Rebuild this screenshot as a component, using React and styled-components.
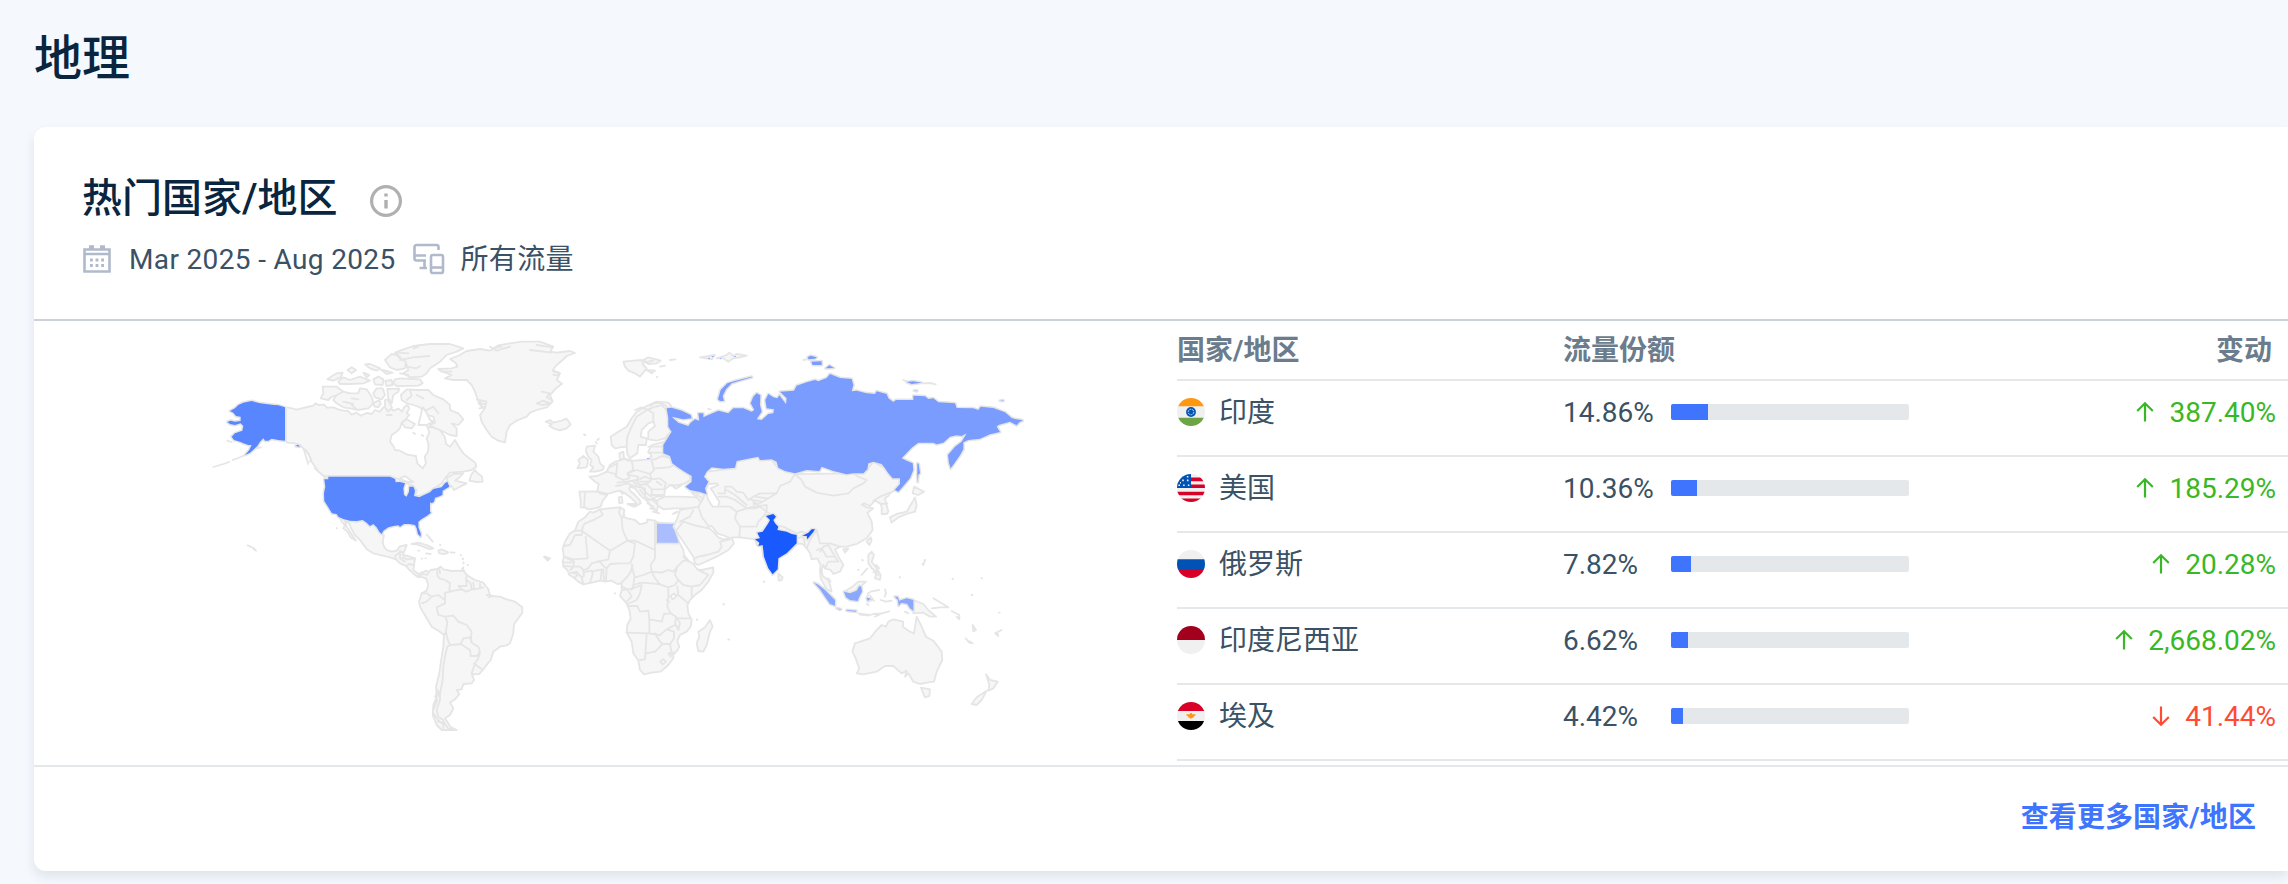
import React from "react";
import styled, { createGlobalStyle } from "styled-components";

const GlobalStyle = createGlobalStyle`
  body {
    margin: 0;
    background: #f5f8fd;
    overflow: hidden;
    font-family: Roboto, "Noto Sans CJK SC", sans-serif;
    color: #3a5166;
  }
`;

const Page = styled.main`
  box-sizing: border-box;
  height: 884px;
  padding: 27px 0 13px 34px;
  display: flex;
  flex-direction: column;
  overflow: hidden;
`;

const PageTitle = styled.h1`
  margin: 0 0 36px;
  height: 64px;
  font-size: 48px;
  line-height: 64px;
  font-weight: 500;
  color: #092540;
`;

const Card = styled.section`
  height: 744px;
  display: flex;
  flex-direction: column;
  background: #fff;
  border-radius: 12px 0 0 12px;
  box-shadow: 0 6px 12px rgba(14, 30, 62, 0.09);
`;

const CardHeader = styled.header`
  box-sizing: border-box;
  height: 194px;
  padding: 44px 48px 0;
  border-bottom: 2px solid #cbd1d7;
`;

const TitleRow = styled.div`
  display: flex;
  align-items: center;
  gap: 32px;
  height: 56px;
`;

const CardTitle = styled.h2`
  margin: 0;
  font-size: 40px;
  line-height: 56px;
  font-weight: 500;
  color: #092540;
`;

const MetaRow = styled.div`
  display: flex;
  align-items: center;
  height: 40px;
  margin-top: 12px;
  padding-left: 1px;
  font-size: 28px;
  line-height: 40px;
`;

const MetaText = styled.span`
  margin: 0 ${(p) => p.$after || 0}px 0 ${(p) => p.$before}px;
  padding-top: 2px;
  letter-spacing: 0.35px;
  white-space: nowrap;
`;

const Icon = styled.svg`
  display: block;
  flex: none;
  width: ${(p) => p.$w}px;
  height: ${(p) => p.$h || p.$w}px;
  margin-top: ${(p) => p.$drop || 0}px;
`;

const CardBody = styled.div`
  height: 444px;
  display: flex;
`;

const MapPane = styled.div`
  box-sizing: border-box;
  flex: none;
  width: 1143px;
  padding: 9px 0 0 166px;
`;

const Table = styled.div`
  flex: 1;
`;

const Row = styled.div`
  box-sizing: border-box;
  display: grid;
  grid-template-columns: 386px 108px 238px 1fr;
  align-items: center;
  height: ${(p) => (p.$head ? 60 : 76)}px;
  padding-bottom: ${(p) => (p.$head ? 0 : 12)}px;
  border-bottom: 2px solid #e4e8eb;
  font-size: 28px;
  line-height: 40px;
`;

const HeadCell = styled.div`
  grid-column: ${(p) => p.$col};
  text-align: ${(p) => p.$align || "left"};
  padding-top: 2px;
  padding-right: ${(p) => (p.$align ? 16 : 0)}px;
  font-weight: 700;
  color: #6b7c8c;
`;

const CellText = styled.span`
  display: block;
  padding-top: 2px;
  white-space: nowrap;
`;

const Country = styled.div`
  display: flex;
  align-items: center;
  gap: 14px;
`;

const Track = styled.div`
  height: 16px;
  border-radius: 2px;
  background: #e4e8eb;
  overflow: hidden;
`;

const Fill = styled.div`
  height: 100%;
  background: #3e74fe;
`;

const Change = styled.div`
  display: flex;
  align-items: center;
  justify-content: flex-end;
  gap: 12px;
  padding-right: 12px;
  color: ${(p) => (p.$down ? "#ff4b33" : "#39b827")};
`;

const CardFooter = styled.footer`
  box-sizing: border-box;
  height: 106px;
  display: flex;
  align-items: center;
  justify-content: flex-end;
  padding: 0 32px 2px 0;
  border-top: 2px solid #e4e8eb;
`;

const MoreLink = styled.a`
  font-size: 28px;
  line-height: 40px;
  font-weight: 700;
  letter-spacing: 0.1px;
  color: #3e74fe;
`;

const MapSvg = styled.svg`
  display: block;
`;

const Land = styled.path`
  fill: ${(p) => p.$fill || "#f6f6f6"};
  stroke: #e5e5e5;
  stroke-width: 5.4;
  stroke-linejoin: round;
  stroke-linecap: round;
`;

const TintedLand = styled(Land)`
  stroke-width: 9;
  paint-order: stroke;
`;

// Each sheet holds outlines in thirds of a pixel, measured from its own origin.
const SHEETS = [
  {
    at: [200, 320],
    land: [
      "M257,262 272,264 290,269 305,265 322,261 340,257 346,250 356,255 372,254 380,263 400,262 415,268 430,272 445,273 455,284 470,278 482,287 500,279 515,282 525,270 540,275 550,262 560,258 570,262 580,272 596,266 606,275 612,262 622,255 628,265 620,280 628,285 615,300 605,308 600,325 590,335 575,345 570,365 580,378 585,390 600,392 622,404 648,408 652,430 668,445 678,430 674,410 684,395 686,375 680,355 688,338 683,322 700,322 720,330 735,352 738,372 750,380 765,360 775,378 790,400 808,415 826,428 829,440 815,450 790,455 750,458 735,475 725,490 700,507 685,517 665,526 645,530 650,510 636,495 620,490 608,485 590,475 570,469 385,469 372,468 355,455 345,440 335,425 325,400 310,385 300,375 285,370 262,368 257,362Z",
      "M418,593 450,602 470,603 488,600 500,608 510,618 520,612 538,635 545,642 552,645 548,665 552,680 560,690 575,695 590,692 598,680 620,675 615,690 608,700 600,705 588,718 570,712 545,706 520,700 500,688 495,680 480,660 465,645 455,628 447,610 435,603 440,620 450,635 460,650 468,662 452,652 442,635 430,625 435,615 425,605Z",
      "M588,718 585,708 598,698 612,695 608,705 625,708 645,715 642,735 640,750 655,762 665,758 680,752 690,758 680,765 665,770 655,772 645,765 630,752 618,738 600,730Z",
      "M610,160 625,150 618,130 600,115 600,110 585,98 600,92 640,78 690,72 750,72 790,85 770,95 740,105 720,125 690,145 680,160 665,170 630,172Z",
      "M555,120 575,102 590,105 600,115 618,125 615,145 590,150 570,142Z",
      "M585,178 600,175 660,178 668,190 655,197 590,198 580,190Z",
      "M368,200 410,200 430,215 420,225 395,230 385,240 362,235 370,220Z",
      "M410,225 430,215 450,220 475,220 480,205 500,208 515,230 520,250 505,265 475,270 450,265 430,262 410,250 400,240Z",
      "M382,178 410,160 428,158 422,172 400,182Z",
      "M415,185 430,172 450,180 480,170 510,182 490,190 450,192 420,192Z",
      "M443,150 455,142 468,150 455,160Z",
      "M495,133 510,132 540,145 530,152 510,145Z",
      "M520,178 535,170 550,178 548,195 525,193Z",
      "M520,220 530,205 548,205 555,225 545,238 525,232Z",
      "M562,207 598,206 595,215 580,225 575,250 565,235Z",
      "M555,183 575,180 578,195 560,198Z",
      "M542,148 578,158 560,162Z M490,158 508,165 500,172Z M520,250 538,240 542,252 535,262 524,260Z M555,240 562,238 576,262 565,275 555,262Z",
      "M603,225 620,208 650,210 685,210 700,225 730,238 750,255 750,270 775,280 790,298 775,315 755,310 770,325 770,348 750,345 720,330 700,322 690,315 705,308 700,290 680,285 660,262 640,255 620,250 605,240Z",
      "M605,308 620,298 645,312 635,325 615,322Z",
      "M815,462 825,450 835,462 845,468 848,485 830,486 808,482Z",
      "M740,475 760,462 790,460 775,475 765,482 800,490 780,500 762,510 755,498 745,495Z",
      "M635,672 655,668 680,675 700,685 690,688 670,680 650,673Z M715,692 725,688 745,697 735,702 718,700Z",
    ],
    lines:
      "M40,441 70,432 88,426 M98,420 115,414 135,405 M143,676 160,684 168,692 160,686 M410,624 411,625 M678,700 692,702 M655,692 658,692 M752,697 764,698 M680,643 690,655 698,665 M720,675 721,675 M782,705 783,706 M788,715 789,718 M790,728 791,730 M803,735 804,735 M790,742 789,744 M665,716 666,716 M676,715 677,715 M310,385 315,400 325,432 M318,390 332,415 330,425 M345,445 375,472 M170,385 182,382 M82,362 95,366 M600,692 600,715 615,725 M608,712 622,718 645,715 M618,738 628,732 642,735 M600,120 640,112 688,108 M590,98 625,100 M620,140 650,145 660,138 M600,160 625,165 M640,85 655,80 M430,245 460,252 M455,235 475,238 M560,285 575,285 M630,210 635,228 620,240 M650,225 670,235 M680,270 700,260 715,280 M640,338 645,342 M665,345 670,348 M680,320 690,320 M455,255 470,268",
    water: "M600,475 615,468 628,478 640,486 625,486 612,482Z M655,315 668,262 678,275 690,300 700,305 680,315Z",
    tint: [
      ["#5786ff", "M373,478 385,478 385,470 570,470 585,477 587,487 600,486 615,490 610,505 612,525 620,530 627,515 628,500 640,500 645,512 642,528 658,532 672,525 690,517 700,507 725,502 735,490 742,485 748,500 735,508 728,512 727,525 715,530 705,533 702,545 695,550 690,547 690,575 693,578 680,588 665,597 655,605 655,622 662,640 662,650 654,642 650,625 645,615 628,612 612,612 600,620 595,616 580,618 565,622 550,632 545,642 538,635 530,622 520,612 510,618 500,608 488,600 470,603 450,602 430,597 415,590 410,582 396,580 385,562 373,543 372,520 376,500Z"],
      ["#5786ff", "M255,262 255,362 235,360 215,356 205,362 195,362 190,355 180,365 172,378 165,385 150,398 135,405 148,390 155,375 145,375 130,370 120,365 110,362 102,360 95,350 105,340 127,332 130,318 122,310 105,315 90,312 82,306 92,302 105,305 122,303 122,290 108,288 100,278 90,273 105,265 115,255 130,248 155,243 180,250 215,254 235,256Z M287,378 294,374 300,380Z"],
    ],
  },
  {
    at: [370, 320],
    land: [
      "M205,147 245,145 262,140 258,130 240,117 270,105 290,93 330,87 360,92 385,76 420,70 455,65 510,65 550,80 540,95 560,98 600,93 615,99 590,108 578,120 560,135 548,150 570,160 560,180 576,191 558,205 545,220 540,225 548,245 530,262 500,270 480,278 470,290 440,302 420,315 410,335 405,367 385,362 365,350 350,330 335,305 330,285 345,265 330,255 322,235 315,215 305,195 290,180 250,180 225,175 245,165 210,152Z",
      "M527,305 540,300 550,308 575,302 590,296 602,313 590,325 570,331 550,325 538,317 545,312Z",
    ],
    lines:
      "M320,238 350,245 345,262 328,265 M325,250 348,252 M330,240 335,262 M515,215 540,220 530,232 545,240 M500,250 520,242 540,250 515,255Z M360,80 380,92 420,80 M372,84 395,80 M480,90 545,98 M500,75 548,82 M642,343 646,345 M522,710 538,715 533,722Z M550,155 568,158 562,166 550,164 M215,155 245,155",
  },
  {
    at: [400, 500],
    land: [
      "M55,228 70,222 80,225 92,210 112,207 122,200 130,208 155,213 190,212 200,225 225,240 250,248 265,268 270,288 300,290 320,298 345,305 367,322 367,338 355,355 342,372 340,400 330,430 320,436 300,440 280,455 272,480 262,492 250,508 238,522 222,523 215,520 222,540 215,550 190,552 185,568 170,570 178,582 165,598 150,608 160,625 150,645 135,655 145,670 150,680 170,690 125,690 110,675 98,645 100,615 110,590 108,560 118,520 122,490 130,440 132,405 115,392 95,380 80,355 60,320 57,305 65,280 80,272 85,255 78,235Z",
    ],
    lines:
      "M112,207 112,225 118,235 135,240 150,250 148,270 152,275 160,272 185,268 175,258 200,258 198,240 200,225 M200,240 212,250 215,268 M220,248 222,268 M240,250 240,265 M185,268 200,275 215,268 235,266 250,262 M152,275 135,278 135,300 M65,280 80,280 95,290 80,305 65,310 M95,290 115,285 135,300 135,310 110,322 115,345 135,350 160,347 175,365 200,375 215,395 213,410 215,428 235,440 240,455 230,468 212,468 M235,468 238,455 M215,428 210,412 190,415 182,432 210,450 212,468 230,468 M135,350 142,365 138,395 132,405 M138,395 142,415 150,435 182,432 M240,460 235,475 225,490 215,520 M222,490 245,508 M150,435 142,440 135,470 130,500 128,540 120,580 120,600 110,630 115,650 130,660 130,685 M105,590 118,575 M102,625 112,600 M105,650 125,670 M112,665 135,668 M260,285 278,288 265,292 M118,208 120,220 M112,570 118,590 M104,610 110,595 M100,640 108,650 M135,672 145,686 160,688 M186,205 193,213",
  },
  {
    at: [540, 330],
    land: [
      "M118,485 172,484 180,490 202,495 188,512 182,530 165,535 145,538 135,533 122,532 122,510Z",
      "M140,350 165,347 160,365 175,380 180,400 192,410 188,420 165,425 150,425 160,412 150,405 155,390 145,380 138,365Z",
      "M115,390 130,378 145,390 140,412 112,415 120,400Z",
      "M215,345 212,320 235,305 260,290 275,265 290,245 320,228 350,215 385,218 395,230 378,240 388,260 392,290 392,305 375,325 350,332 325,328 325,305 345,288 340,275 325,280 305,300 302,320 320,325 318,345 295,345 292,370 270,385 262,372 260,350 240,352 225,355Z",
      "M238,370 250,365 252,385 240,392Z",
      "M148,440 172,438 200,425 210,405 225,395 238,392 255,385 262,392 285,392 325,388 335,378 325,365 335,345 375,335 372,365 395,385 400,405 430,420 450,432 450,450 435,460 415,465 405,468 390,465 375,478 372,500 350,500 335,508 355,525 350,545 335,530 320,512 300,495 285,475 270,470 268,480 285,495 300,512 302,520 285,530 290,520 275,505 255,490 240,482 225,485 210,490 195,490 172,484 176,462 165,455Z",
      "M352,510 375,500 420,500 470,502 490,510 495,525 475,535 430,535 400,535 370,538 352,525Z",
      "M455,488 490,490 505,505 515,530 490,525 470,502Z",
      "M250,95 280,92 305,90 310,105 320,115 300,140 285,130 265,122 255,110Z M310,90 325,82 362,92 350,100 325,102Z M320,120 345,122 335,130Z",
      "M480,82 525,75 515,88Z M530,85 560,75 568,68 580,78 590,72 620,77 600,82 580,85 565,95 550,85Z",
      "M236,502 245,500 248,518 238,520Z M262,522 285,522 280,530Z M395,466 425,466 408,476Z",
    ],
    lines:
      "M135,488 132,530 M260,350 262,320 275,290 290,260 325,238 350,228 M325,240 340,250 340,275 M350,230 365,225 378,240 M285,240 305,232 320,238 M330,228 345,218 365,220 378,228 M275,392 280,420 262,430 290,420 330,432 342,420 335,392 M228,440 232,400 M228,440 250,450 268,445 262,430 M200,425 225,432 228,440 M232,458 262,455 290,450 295,440 268,435 M290,452 315,440 335,448 320,462 298,465Z M320,462 335,478 372,478 378,460 360,445 335,448 330,432 M335,478 335,495 368,495 M298,465 320,490 335,500 M315,475 315,500 330,510 M228,468 245,465 262,460 285,470 M325,350 370,350 M325,368 365,368 M325,388 345,388 365,378 395,385 M342,415 385,412 405,405 M320,510 340,508 350,512 M322,520 340,530 M330,535 345,538 M338,545 358,550 M398,552 412,545 M242,485 248,492 M390,90 406,88 M350,142 352,140 M360,110 375,107 M133,314 136,315 M172,330 177,326 M168,336 170,340 M232,400 210,412 M300,455 330,455 M280,455 290,465 M290,470 315,475 M350,455 365,465 M300,480 310,492 M470,495 490,505 500,520 M485,510 500,530 M255,388 270,388 M312,98 340,92",
    marks: [["#7b9cff", "M505,83h5v3h-5z M515,79h6v2h-6z M540,84h3v2h-3z M583,78h5v2h-5z M321,384h6v2h-6z"]],
  },
  {
    at: [540, 490],
    land: [
      "M150,65 160,68 180,58 205,55 240,52 253,60 250,80 262,85 285,90 300,103 320,98 322,88 345,92 355,98 385,100 408,100 412,115 400,115 418,158 430,180 432,195 445,212 460,222 472,238 485,240 520,232 520,248 505,275 485,300 465,315 450,330 442,345 445,370 455,390 452,410 440,425 420,435 412,452 418,470 412,482 400,490 400,505 385,525 362,545 335,548 312,553 300,540 295,512 280,490 275,455 260,428 262,405 272,385 268,360 260,340 240,318 245,300 245,280 232,282 215,272 195,275 180,272 155,278 130,283 115,275 100,262 88,255 82,240 70,230 68,215 72,200 68,178 75,155 90,130 105,122 115,95 135,82Z",
      "M510,390 518,410 510,425 500,465 490,485 475,483 470,460 478,440 475,425 495,412Z",
      "M715,250 728,262 725,270 716,272Z",
    ],
    lines:
      "M180,58 188,75 165,88 135,100 128,110 125,135 105,135 90,165 70,168 M105,122 125,122 210,182 262,152 248,120 245,85 237,68 240,52 M137,140 143,205 100,208 72,200 102,215 100,230 72,228 M245,85 253,75 M210,182 205,208 175,215 155,220 145,235 130,240 120,230 100,230 M70,217 95,218 M90,240 100,232 M90,250 102,246 112,256 103,264 M100,250 110,245 118,255 125,262 130,283 M130,240 132,258 125,262 M132,246 155,242 158,252 150,278 M155,245 185,238 182,270 M190,238 192,272 M175,212 198,235 M262,152 285,160 280,200 270,220 240,220 210,222 200,235 198,272 M262,152 285,152 345,180 345,92 M345,160 418,160 M345,180 345,205 332,225 335,245 310,255 285,262 278,240 275,225 M278,225 272,245 262,260 245,278 M283,262 280,285 305,278 335,280 360,283 345,265 335,245 365,248 385,240 400,245 412,230 430,212 445,212 M412,230 405,255 415,270 430,285 455,290 480,285 505,255 485,245 472,238 M360,283 385,292 405,285 415,270 M412,290 415,315 445,340 M455,290 455,320 M385,292 385,320 415,315 M385,320 382,350 392,370 M380,330 388,335 M245,290 262,298 280,295 305,285 300,310 290,330 262,342 M250,300 262,298 275,320 260,335 M280,285 275,300 M262,348 292,348 300,365 325,362 328,388 328,425 M260,428 328,430 360,435 380,418 405,405 408,380 392,370 372,372 365,395 328,388 M412,385 450,385 M408,380 420,400 415,420 408,405 M320,432 318,465 315,508 300,510 M345,430 360,455 368,462 345,485 318,490 M380,418 402,425 402,445 390,462 368,462 M390,462 395,490 405,490 M360,515 370,508 378,515 368,523Z M385,490 398,488 392,500Z M224,310 226,310 M550,341 552,344 M565,448 567,449 M471,388 472,390 M672,275 673,276 M14,200 30,205 24,210Z M430,200 445,215",
    water: "M392,318 402,310 408,320 398,328Z",
    tint: [["#a9bdff", "M351,101 385,102 408,102 411,115 400,112 405,125 416,158 351,158Z"]],
  },
  {
    at: [640, 330],
    land: [
      "M190,440 200,425 285,415 290,395 355,380 395,390 415,415 465,432 640,430 682,418 700,395 735,415 758,445 780,445 775,470 762,482 750,490 745,498 735,505 740,525 745,545 740,552 725,552 725,530 720,520 705,512 690,528 672,520 665,524 680,532 700,535 682,548 695,575 698,600 680,625 650,642 620,650 600,650 585,658 598,685 610,705 600,725 580,732 572,720 555,715 550,705 545,720 548,738 565,750 572,772 575,785 560,778 550,760 542,745 540,720 542,705 532,685 515,688 510,670 500,655 488,642 472,640 455,660 415,685 413,715 400,730 385,715 370,680 365,648 350,645 345,628 300,622 275,622 282,640 265,660 230,680 175,705 165,700 160,680 130,635 100,590 110,570 115,555 120,540 130,538 175,530 190,505 198,475Z",
      "M750,562 770,552 800,545 815,520 825,502 830,525 825,545 800,552 775,562 755,578Z M822,470 852,485 835,495 818,490Z M692,622 695,632 688,645 680,635Z M610,658 625,655 615,668Z",
    ],
    water:
      "M198,480 205,462 230,460 235,465 212,475 222,490 238,515 235,530 218,530 205,510 200,495Z M203,590 215,588 232,610 255,618 270,624 250,628 235,622 222,608Z",
    lines:
      "M235,490 255,490 255,470 275,470 290,485 310,488 325,510 340,500 360,490 410,490 420,468 450,455 465,432 485,450 495,470 530,488 580,497 625,490 640,475 670,460 680,450 655,440 640,430 M345,500 385,505 360,520 340,522 M235,500 260,500 285,510 320,535 340,530 380,525 380,545 405,560 M240,530 270,530 290,545 285,565 300,590 298,622 M290,545 320,535 345,535 360,530 380,545 365,565 355,575 350,590 300,590 M385,505 410,490 M335,510 350,512 365,515 M260,480 285,495 320,525 M415,588 430,590 470,610 485,605 500,610 M175,530 185,560 205,588 M120,575 150,560 160,540 M110,600 130,575 160,585 205,595 M165,685 175,680 200,675 235,665 245,650 240,635 270,628 M500,655 510,630 530,600 M530,600 540,640 570,640 600,650 M540,665 550,650 565,645 585,680 595,695 565,695 555,715 M530,660 545,655 560,680 585,680 M470,625 490,620 495,645 M725,522 742,520 M700,512 720,500 750,488 M420,600 440,606 M340,515 355,525 M850,705 855,690 M667,690 668,691 M205,237 212,238 M105,550 112,545 M565,745 572,755",
    tint: [
      ["#7b9cff", "M80,235 95,233 125,242 152,255 155,265 130,268 95,260 115,278 145,288 152,278 165,268 178,272 175,250 190,250 190,262 205,255 235,242 265,250 280,235 310,235 335,245 343,240 332,220 340,200 350,190 361,196 360,225 365,245 350,268 365,270 385,252 400,250 402,238 380,235 376,210 385,192 400,202 412,205 418,196 438,222 440,205 420,185 462,182 470,167 500,157 525,150 535,154 560,144 570,132 600,144 635,147 640,165 635,184 650,182 680,190 705,192 710,184 740,192 745,205 760,216 768,210 820,210 820,197 855,199 865,207 880,205 895,217 945,220 950,234 1000,235 1015,240 1022,230 1060,234 1095,247 1115,264 1125,267 1145,270 1148,272 1138,276 1130,286 1110,275 1075,285 1070,290 1080,306 1050,313 1020,326 985,330 970,337 970,358 960,376 948,393 932,415 927,400 924,375 945,350 965,335 980,310 965,318 950,316 930,320 910,338 890,343 880,338 835,338 815,353 785,385 800,392 818,400 820,420 810,445 790,468 775,485 764,480 780,462 780,445 758,445 745,430 735,415 725,402 700,395 685,400 682,418 670,430 640,430 620,433 580,423 545,410 538,423 500,420 465,430 435,423 415,413 410,395 395,388 360,390 355,380 290,393 285,413 250,416 215,412 200,425 192,440 205,455 195,475 200,493 180,486 150,480 137,470 155,455 155,438 130,423 115,413 97,400 90,378 70,370 70,345 95,305 85,290 85,265Z"],
      ["#7b9cff", "M832,400 836,402 840,430 835,434 833,456 832,430Z M234,208 242,180 262,160 285,153 335,140 336,142 300,152 275,160 258,178 248,198 252,213 240,213Z M503,82 512,77 530,82 525,86 506,88Z M514,95 545,94 545,105 518,105Z M557,115 568,106 582,114Z M800,156 820,154 845,158 815,162Z M822,182 832,182 830,184Z M1080,212 1090,211 1090,213Z"],
      ["#195afe", "M378,558 400,552 408,560 400,570 405,580 415,590 412,600 440,605 455,612 470,615 470,640 455,655 440,670 415,685 413,718 398,733 385,715 372,680 368,645 355,648 358,638 345,628 360,625 352,608 368,605 385,580 390,570Z M487,617 505,608 515,598 525,598 520,606 510,618 502,628 500,618Z"],
    ],
    after: "M490,90 500,88 M790,150 800,154 M850,160 870,159 887,163",
  },
  {
    at: [760, 500],
    land: [
      "M325,165 335,155 342,165 335,185 350,205 362,225 360,240 345,235 350,215 335,205 325,190Z",
      "M252,275 275,262 295,245 318,245 305,257 290,272 270,280Z",
      "M460,300 490,312 505,330 528,350 510,350 490,338 460,340Z",
      "M400,358 430,365 428,380 450,395 462,400 470,350 485,380 498,410 520,422 545,455 547,480 530,515 522,545 500,548 480,552 460,545 445,520 435,530 440,512 425,520 400,498 375,498 350,515 310,523 290,520 298,505 285,470 277,455 285,430 330,415 350,390 365,375 378,380 385,365Z",
      "M483,563 510,568 508,588 495,592Z",
      "M678,523 690,540 713,545 700,565 685,572 688,555Z M680,572 665,600 650,615 635,612 650,592Z",
    ],
    lines:
      "M305,225 322,205 M295,340 330,345 340,342 365,340 388,334 M345,350 365,340 M300,344 325,347 M322,290 324,280 335,274 357,270 M330,286 342,303 M326,315 320,312 M520,295 545,310 565,322 540,322 515,325 M575,333 598,345 598,358 590,350 M375,268 378,280 374,290 M362,300 378,305 395,302 M617,415 628,428 638,430 628,424 M705,400 725,390 M708,402 715,408 712,398 M638,375 648,390 640,394Z M487,192 489,192 M494,180 495,182 M419,231 420,233 M577,236 579,237 M664,234 666,235 M635,285 637,285 M717,338 719,338 M307,180 308,181 M294,209 296,210 M11,244 12,245 M435,335 445,340 M348,195 358,205 M340,215 355,225",
    tint: [
      ["#8ba8ff", "M162,248 175,254 195,270 215,290 225,300 225,317 210,312 195,290 180,268Z M230,325 243,328 240,329Z M260,330 289,332 288,335 260,332Z M252,275 270,280 290,272 298,258 304,260 306,275 298,290 293,303 270,300 258,292Z M320,294 328,294 334,300 328,298 324,304Z M404,290 413,290 418,302 440,295 460,300 460,332 450,325 442,312 424,308 416,317 414,300Z"],
    ],
  },
];

function WorldMap() {
  return (
    <MapSvg width="840" height="410" viewBox="200 330 840 410">
      {SHEETS.map((s) => (
        <g key={s.at.join()} transform={`translate(${s.at[0]} ${s.at[1]}) scale(0.33333)`}>
          {s.land.map((d) => (
            <Land key={d} d={d} />
          ))}
          {s.lines && <Land $fill="none" d={s.lines} />}
          {s.water && <Land $fill="#fff" d={s.water} />}
          {s.tint && s.tint.map(([color, d]) => <TintedLand key={d} $fill={color} d={d} />)}
          {s.marks && s.marks.map(([color, d]) => <path key={d} fill={color} d={d} />)}
          {s.after && <Land $fill="none" d={s.after} />}
        </g>
      ))}
    </MapSvg>
  );
}

const FLAGS = {
  in: (
    <>
      <path fill="#f0f0f0" d="M0 0h28v28H0z" />
      <path fill="#ff9811" d="M0 0h28v8.2H0z" />
      <path fill="#6da544" d="M0 19.8h28V28H0z" />
      <circle cx="14" cy="14" r="4.9" fill="#0052b4" />
      <circle cx="14" cy="14" r="2.8" fill="none" stroke="#f0f0f0" strokeWidth="0.8" strokeDasharray="2 .8" />
    </>
  ),
  us: (
    <>
      <path fill="#f0f0f0" d="M0 0h28v28H0z" />
      <path fill="#d80027" d="M13.4 3.6H28v3.6H13.4zM13.4 10.6H28V14H13.4zM0 17.7h28v3.6H0zM0 24.6h28V28H0z" />
      <path fill="#0052b4" d="M0 0h14v14H0z" />
      <path
        fill="none"
        stroke="#f0f0f0"
        strokeWidth="1.6"
        strokeDasharray="1.6 3.1"
        d="M9.8 2.8h3M5.2 6.4h8M1.4 11.2h12M3 8.8h1"
      />
    </>
  ),
  ru: (
    <>
      <path fill="#f0f0f0" d="M0 0h28v28H0z" />
      <path fill="#0052b4" d="M0 9.2h28v10H0z" />
      <path fill="#d80027" d="M0 19h28v9H0z" />
    </>
  ),
  id: (
    <>
      <path fill="#f0f0f0" d="M0 0h28v28H0z" />
      <path fill="#a2001d" d="M0 0h28v14H0z" />
    </>
  ),
  eg: (
    <>
      <path fill="#f0f0f0" d="M0 0h28v28H0z" />
      <path fill="#d80027" d="M0 0h28v9.1H0z" />
      <path fill="#000" d="M0 18.9h28V28H0z" />
      <path fill="#ff9811" d="M9.2 12.2h3.5a1.3 1.3 0 0 1 2.6 0h3.5c0 1-.8 1.7-1.7 1.7 0 .9-.7 1.6-1.6 1.6 0 .6-.6 1-1.5 1s-1.5-.4-1.5-1c-.9 0-1.6-.7-1.6-1.6-.9 0-1.7-.7-1.7-1.7z" />
    </>
  ),
};

function Flag({ code }) {
  return (
    <Icon $w={28} viewBox="0 0 28 28">
      <clipPath id={`flag-${code}`}>
        <circle cx="14" cy="14" r="14" />
      </clipPath>
      <g clipPath={`url(#flag-${code})`}>{FLAGS[code]}</g>
    </Icon>
  );
}

const ROWS = [
  { code: "in", name: "印度", share: 14.86, change: "387.40%" },
  { code: "us", name: "美国", share: 10.36, change: "185.29%" },
  { code: "ru", name: "俄罗斯", share: 7.82, change: "20.28%" },
  { code: "id", name: "印度尼西亚", share: 6.62, change: "2,668.02%" },
  { code: "eg", name: "埃及", share: 4.42, change: "41.44%", down: true },
];

function CountryRow({ code, name, share, change, down }) {
  return (
    <Row>
      <Country>
        <Flag code={code} />
        <CellText>{name}</CellText>
      </Country>
      <CellText>{share.toFixed(2)}%</CellText>
      <Track>
        <Fill style={{ width: `calc(${share}% + 1.4px)` }} />
      </Track>
      <Change $down={down}>
        <Icon $w={24} viewBox="0 0 24 24" fill="none" stroke="currentColor" strokeWidth="2.2">
          <path d={down ? "M12 2.5v18M4.2 13l7.8 7.700 7.800-7.700" : "M12 21.500v-18M4.200 11L12 3.300l7.800 7.700"} />
        </Icon>
        <CellText>{change}</CellText>
      </Change>
    </Row>
  );
}

export default function App() {
  return (
    <>
      <GlobalStyle />
      <Page>
        <PageTitle>地理</PageTitle>
        <Card>
          <CardHeader>
            <TitleRow>
              <CardTitle>热门国家/地区</CardTitle>
              <Icon $w={32} $drop={3} viewBox="0 0 32 32" fill="none" stroke="#b0b0b0">
                <circle cx="16" cy="16" r="14.4" strokeWidth="3.2" />
                <path d="M16 15v8.500M16 8.500v3" strokeWidth="3.400" />
              </Icon>
            </TitleRow>
            <MetaRow>
              <Icon $w={28} viewBox="0 0 28 28" fill="none" stroke="#b0bacb">
                <path d="M1.500 4.500h25v22h-25zM1.500 9h25" strokeWidth="2.600" />
                <path d="M6 2.200h5M17 2.200h5" strokeWidth="3.800" />
                <path d="M7 15h15M7 20.500h15" strokeWidth="2.800" strokeDasharray="2.800 2.800" />
              </Icon>
              <MetaText $before={18} $after={17}>Mar 2025 - Aug 2025</MetaText>
              <Icon $w={32} viewBox="0 0 32 32" fill="none" stroke="#b0bacb" strokeWidth="2.600">
                <path d="M25.500 7V4a2 2 0 0 0-2-2h-20a2 2 0 0 0-2 2v11.500a2 2 0 0 0 2 2H13M1.500 12.500H13M11.500 17.500v7M6.500 25H14" />
                <rect x="18" y="12" width="12" height="18" rx="1.800" />
                <path d="M18 24.500h12" />
              </Icon>
              <MetaText $before={16}>所有流量</MetaText>
            </MetaRow>
          </CardHeader>
          <CardBody>
            <MapPane>
              <WorldMap />
            </MapPane>
            <Table>
              <Row $head>
                <HeadCell $col="1">国家/地区</HeadCell>
                <HeadCell $col="2 / 4">流量份额</HeadCell>
                <HeadCell $col="4" $align="right">变动</HeadCell>
              </Row>
              {ROWS.map((r) => (
                <CountryRow key={r.code} {...r} />
              ))}
            </Table>
          </CardBody>
          <CardFooter>
            <MoreLink>查看更多国家/地区</MoreLink>
          </CardFooter>
        </Card>
      </Page>
    </>
  );
}
